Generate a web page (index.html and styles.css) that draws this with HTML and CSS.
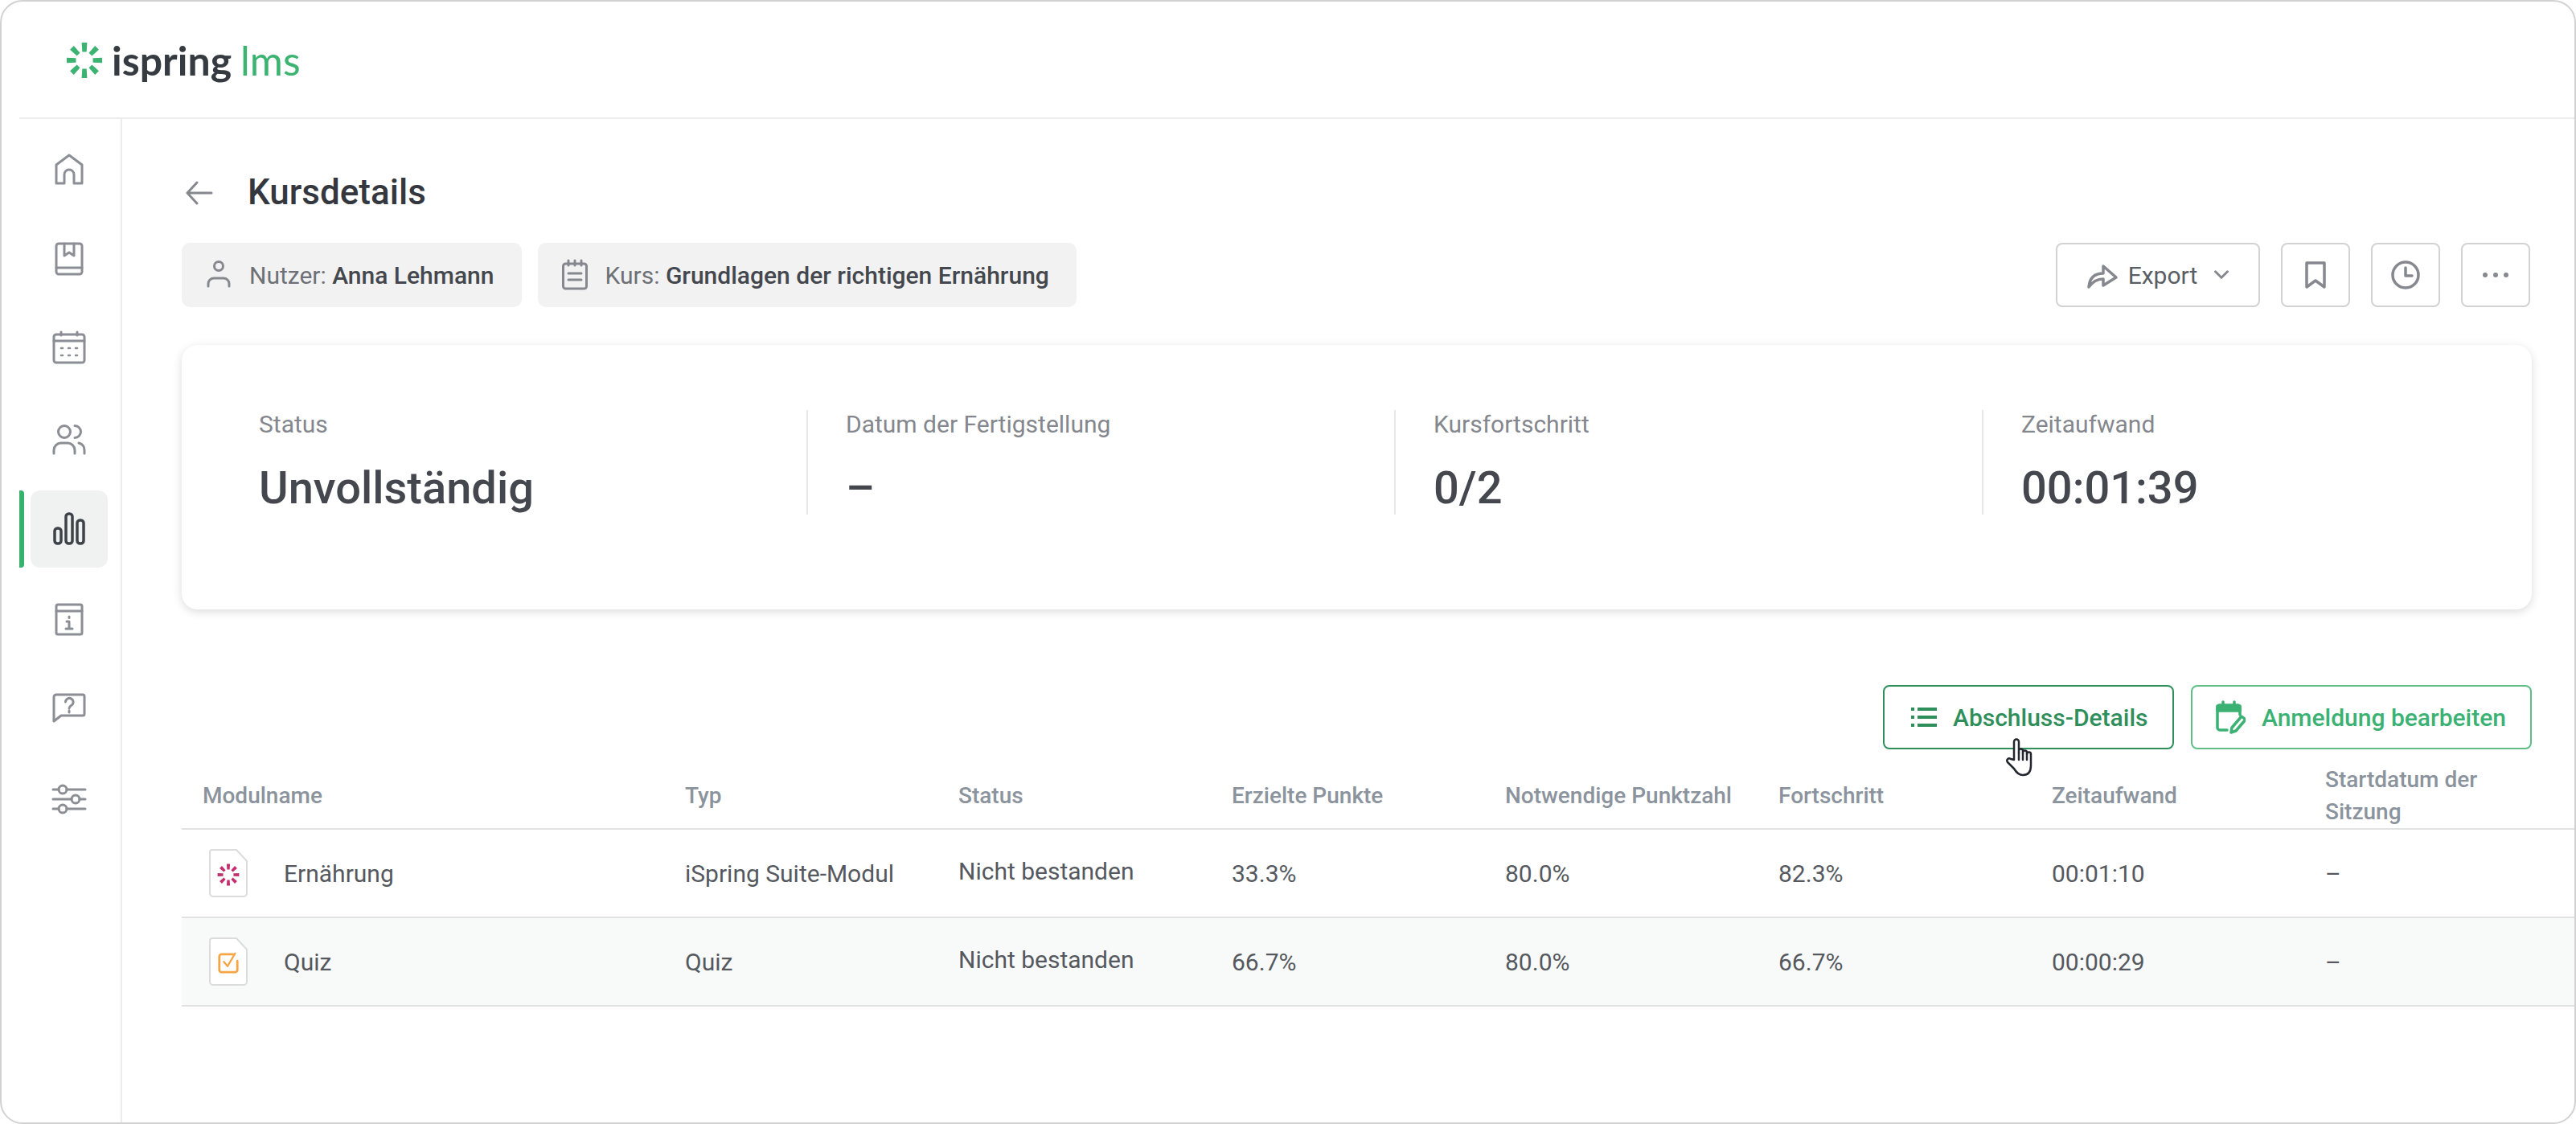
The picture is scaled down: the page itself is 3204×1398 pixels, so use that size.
FILE: index.html
```html
<!DOCTYPE html>
<html lang="de">
<head>
<meta charset="utf-8">
<title>Kursdetails</title>
<link rel="stylesheet" href="styles.css">
</head>
<body>
<svg class="defs" width="0" height="0" aria-hidden="true">
  <symbol id="spark" viewBox="-24 -24 48 48">
    <g fill="currentColor">
      <path id="petal" d="M-3.500 -23H3.500L2.800 -11H-2.800Z"/>
      <use href="#petal" transform="rotate(45)"/>
      <use href="#petal" transform="rotate(90)"/>
      <use href="#petal" transform="rotate(135)"/>
      <use href="#petal" transform="rotate(180)"/>
      <use href="#petal" transform="rotate(225)"/>
      <use href="#petal" transform="rotate(270)"/>
      <use href="#petal" transform="rotate(315)"/>
    </g>
  </symbol>
</svg>
<div class="window">
  <header class="topbar">
    <div class="logo">
      <svg class="logo-mark" viewBox="0 0 48 48"><use href="#spark"/></svg>
      <span class="logo-main">ispring</span><span class="logo-sub">lms</span>
    </div>
  </header>
  <div class="body-row">
    <nav class="sidebar">
      <a class="nav-item"><svg class="ico48" viewBox="0 0 48 48"><path d="M8 42V19L24 7l16 12v23H30V31a6 6 0 0 0-12 0v11Z"/></svg></a>
      <a class="nav-item"><svg class="ico48" viewBox="0 0 48 48"><rect x="8" y="5" width="32" height="38" rx="3"/><path d="M8 35h32M18 5v15l6-4 6 4V5"/></svg></a>
      <a class="nav-item"><svg class="ico48" viewBox="0 0 48 48"><rect x="5" y="6" width="38" height="35" rx="3"/><path d="M5 14h38M14 3v4M34 3v4"/><path class="dots" d="M14 23h2M23 23h2M32 23h2M14 32h2M23 32h2M32 32h2"/></svg></a>
      <a class="nav-item"><svg class="ico48" viewBox="0 0 48 48"><circle cx="18" cy="15" r="7.500"/><path d="M31 7.500a7.500 7.500 0 0 1 0 15M5 42v-4a9 9 0 0 1 9-9h8a9 9 0 0 1 9 9v4M36 29a8.500 8.500 0 0 1 7 9v4"/></svg></a>
      <a class="nav-item nav-active"><svg class="ico48 ico-dark" viewBox="0 0 48 48"><rect x="6" y="23" width="8" height="19" rx="3.500"/><rect x="20" y="5" width="8" height="37" rx="3.500"/><rect x="34" y="13" width="8" height="29" rx="3.500"/></svg></a>
      <a class="nav-item"><svg class="ico48" viewBox="0 0 48 48"><rect x="8" y="6" width="32" height="37" rx="2"/><path d="M8 14h32M24 21v1.500M21 27h3v9M20 36h8"/></svg></a>
      <a class="nav-item"><svg class="ico48" viewBox="0 0 48 48"><path d="M8 6h33a2 2 0 0 1 2 2v22a2 2 0 0 1-2 2H14l-9 7V9a3 3 0 0 1 3-3Z"/><path d="M19.500 15a4.800 4.800 0 1 1 7 4.500c-1.500 1-2.500 1.800-2.500 3.500M24 26v2"/></svg></a>
      <a class="nav-item"><svg class="ico48" viewBox="0 0 48 48"><path d="M4 12h7M21 12h23M4 24h23M37 24h7M4 36h7M21 36h23"/><circle cx="16" cy="12" r="5"/><circle cx="32" cy="24" r="5"/><circle cx="16" cy="36" r="5"/></svg></a>
    </nav>
    <main class="content">
      <div class="title-row">
        <svg class="back" viewBox="0 0 36 36"><path d="M33 18H4M15 5 3 18l12 13"/></svg>
        <h1 class="title">Kursdetails</h1>
      </div>
      <div class="filter-row">
        <div class="chips">
          <div class="chip">
            <svg class="ico40" viewBox="0 0 40 40"><circle cx="20" cy="9" r="5.500"/><path d="M7 34v-3a7 7 0 0 1 7-7h12a7 7 0 0 1 7 7v3"/></svg>
            <span>Nutzer: <b>Anna Lehmann</b></span>
          </div>
          <div class="chip">
            <svg class="ico40" viewBox="0 0 40 40"><rect x="5.500" y="6" width="29" height="31" rx="3"/><path d="M12 2v6M20 2v6M28 2v6M12 18h16M12 26h16"/></svg>
            <span>Kurs: <b>Grundlagen der richtigen Ernährung</b></span>
          </div>
        </div>
        <div class="tools">
          <button class="tool tool-wide">
            <svg class="ico40 ico-thick" viewBox="0 0 40 40"><path d="M3 35c1-11 7-17 18-17v-9l16 14-16 10v-8c-8 0-13 3-18 10Z"/></svg>
            <span>Export</span>
            <svg class="chev" viewBox="0 0 24 14"><path d="M3 2l9 9 9-9"/></svg>
          </button>
          <button class="tool"><svg class="ico40 ico-thick" viewBox="0 0 40 40"><path d="M9 5h22v30l-11-8-11 8Z"/></svg></button>
          <button class="tool"><svg class="ico40 ico-thick" viewBox="0 0 40 40"><circle cx="20" cy="20" r="16"/><path d="M20 11v10h8"/></svg></button>
          <button class="tool"><svg class="ico40 ico-fill" viewBox="0 0 40 40"><circle cx="7" cy="20" r="3"/><circle cx="20" cy="20" r="3"/><circle cx="33" cy="20" r="3"/></svg></button>
        </div>
      </div>
      <section class="card">
        <div class="stat"><div class="stat-label">Status</div><div class="stat-value">Unvollständig</div></div>
        <div class="stat"><div class="stat-label">Datum der Fertigstellung</div><div class="stat-value">–</div></div>
        <div class="stat"><div class="stat-label">Kursfortschritt</div><div class="stat-value">0/2</div></div>
        <div class="stat"><div class="stat-label">Zeitaufwand</div><div class="stat-value">00:01:39</div></div>
      </section>
      <div class="actions">
        <button class="action action-hover">
          <svg class="ico40 ico-green" viewBox="0 0 40 40"><path d="M12 10h24M12 20h24M12 30h24M4 10h4M4 20h4M4 30h4"/></svg>
          <span>Abschluss-Details</span>
          <svg class="cursor" viewBox="0 0 38 50"><path d="M11 27V4.500a3 3 0 0 1 6 0V18v-2a2.500 2.500 0 0 1 5 0v3-1a2.500 2.500 0 0 1 5 0v2a2.500 2.500 0 0 1 5 0v14c0 7-3 12-10 12-5 0-8-3-11-8l-8-8c-2-3 1-6 4-4Z"/><path d="M17 18v9M22 19v8M27 20v7"/></svg>
        </button>
        <button class="action">
          <svg class="ico40 ico-green2" viewBox="0 0 40 44"><path class="band" d="M5 8h28v6H5Z"/><path d="M17 38H8a3 3 0 0 1-3-3V10a3 3 0 0 1 3-3h22a3 3 0 0 1 3 3v9M12 3v6M26 3v6"/><path d="M22 41l1-6 12-14 5 4-12 14Z"/></svg>
          <span>Anmeldung bearbeiten</span>
        </button>
      </div>
      <table class="modules">
        <thead>
          <tr>
            <th>Modulname</th><th>Typ</th><th>Status</th><th>Erzielte Punkte</th><th>Notwendige Punktzahl</th><th>Fortschritt</th><th>Zeitaufwand</th><th>Startdatum der<br>Sitzung</th>
          </tr>
        </thead>
        <tbody>
          <tr>
            <td><div class="module-name">
              <svg class="file" viewBox="0 0 48 60">
                <path class="file-page" d="M4 1h30l13 14v40a4 4 0 0 1-4 4H5a4 4 0 0 1-4-4V4a3 3 0 0 1 3-3Z"/>
                <svg class="pink" x="10" y="18" width="28" height="28" viewBox="0 0 48 48"><use href="#spark"/></svg>
              </svg>Ernährung
            </div></td>
            <td>iSpring Suite-Modul</td><td class="raised">Nicht bestanden</td><td>33.3%</td><td>80.0%</td><td>82.3%</td><td>00:01:10</td><td>–</td>
          </tr>
          <tr class="row-hover">
            <td><div class="module-name">
              <svg class="file" viewBox="0 0 48 60">
                <path class="file-page" d="M4 1h30l13 14v40a4 4 0 0 1-4 4H5a4 4 0 0 1-4-4V4a3 3 0 0 1 3-3Z"/>
                <svg x="10" y="18" width="28" height="28" viewBox="0 0 30 30"><path class="quiz-box" d="M21 3H6a3 3 0 0 0-3 3v18a3 3 0 0 0 3 3h18a3 3 0 0 0 3-3V12"/><path class="quiz-check" d="M9 13l5 6L24 2"/></svg>
              </svg>Quiz
            </div></td>
            <td>Quiz</td><td class="raised">Nicht bestanden</td><td>66.7%</td><td>80.0%</td><td>66.7%</td><td>00:00:29</td><td>–</td>
          </tr>
        </tbody>
      </table>
    </main>
  </div>
</div>
</body>
</html>
```

FILE: styles.css
```css
* { box-sizing: border-box; }
html, body { margin: 0; padding: 0; background: #fff; }
body { font-family: Roboto, "Liberation Sans", sans-serif; color: #44484e; width: 3204px; height: 1398px; overflow: hidden; }
.defs { position: absolute; }

.window { width: 3204px; height: 1398px; border: 2px solid #d2d2d2; border-radius: 28px; padding-left: 22px; display: flex; flex-direction: column; overflow: hidden; background: #fff; }

.topbar { height: 146px; flex: none; border-bottom: 2px solid #ececec; padding-left: 58px; display: flex; align-items: center; }
.logo { display: flex; align-items: baseline; margin-top: 2px; }
.logo-mark { width: 46px; height: 46px; color: #3cb371; margin-right: 11px; align-self: center; }
.logo-main { font-family: Lato, sans-serif; font-weight: 700; font-size: 50px; line-height: 60px; color: #363b42; }
.logo-sub { font-family: Lato, sans-serif; font-weight: 400; font-size: 50px; line-height: 60px; color: #3cb371; margin-left: 11px; }

.body-row { flex: 1; display: flex; min-height: 0; }
.sidebar { width: 128px; flex: none; border-right: 2px solid #ececec; padding: 14px 0 0 14px; display: flex; flex-direction: column; gap: 16px; }
.nav-item { width: 96px; height: 96px; border-radius: 12px; display: flex; align-items: center; justify-content: center; position: relative; }
.nav-active { background: #f0f2f2; }
.nav-active::before { content: ""; position: absolute; left: -14px; top: 0; width: 6px; height: 96px; background: #36b26c; border-radius: 0 4px 4px 0; }

svg { display: block; flex: none; }
.ico48 { width: 48px; height: 48px; fill: none; stroke: #8b8e94; stroke-width: 3; stroke-linejoin: round; stroke-linecap: round; }
.ico48 .dots { stroke-width: 2.500; }
.ico-dark { stroke: #3e434a; stroke-width: 3.500; }
.ico40 { width: 40px; height: 40px; fill: none; stroke: #85888e; stroke-width: 3; stroke-linejoin: round; stroke-linecap: round; }
.ico-thick { stroke-width: 3.500; }
.ico-fill { fill: #85888e; stroke: none; }
.ico-green { stroke: #2f8f5b; stroke-width: 4; stroke-linecap: butt; }
.ico-green2 { stroke: #3bb273; stroke-width: 3.500; height: 44px; }
.band { fill: #3bb273; }

.content { flex: 1; min-width: 0; padding: 64px 53px 0 74px; }
.title-row { display: flex; align-items: center; height: 56px; gap: 42px; margin-left: 4px; }
.back { width: 36px; height: 36px; fill: none; stroke: #85888e; stroke-width: 3; stroke-linecap: round; stroke-linejoin: round; }
.title { margin: -2px 0 0; font-size: 44px; line-height: 56px; font-weight: 500; color: #34383e; }

.filter-row { display: flex; justify-content: space-between; margin-top: 34px; }
.chips { display: flex; gap: 20px; }
.chip { height: 80px; border-radius: 10px; background: #f2f2f2; padding: 0 34px 0 26px; display: flex; align-items: center; gap: 18px; font-size: 30px; color: #6d7177; }
.chip b { font-weight: 500; color: #44484e; }
.tools { display: flex; gap: 26px; margin-right: 2px; }
.tool { width: 86px; height: 80px; border: 2px solid #d2d2d2; border-radius: 8px; background: #fff; display: flex; align-items: center; justify-content: center; padding: 0; font: inherit; font-size: 30px; color: #5a5e64; }
.tool-wide { width: 254px; gap: 12px; }
.chev { width: 20px; height: 12px; margin-left: 8px; fill: none; stroke: #85888e; stroke-width: 3.500; stroke-linecap: round; stroke-linejoin: round; }

.card { margin-top: 47px; height: 329px; border-radius: 20px; background: #fff; box-shadow: 0 3px 12px rgba(0, 0, 0, .14); padding: 81px 0 0 96px; display: flex; }
.stat { flex: none; width: 731px; height: 130px; border-left: 2px solid #e8e8e8; padding-left: 47px; }
.stat:first-child { width: 681px; border-left: 0; padding-left: 0; }
.stat:last-child { width: 590px; }
.stat-label { margin-top: -2px; font-size: 30px; line-height: 40px; color: #84878d; }
.stat-value { margin-top: 23px; font-size: 56px; line-height: 72px; font-weight: 500; color: #44484e; }

.actions { display: flex; justify-content: flex-end; gap: 21px; margin-top: 94px; }
.action { height: 80px; width: 424px; padding-left: 26px; gap: 20px; border: 2px solid #5fbe87; border-radius: 8px; background: #fff; display: flex; align-items: center; font: inherit; font-size: 30px; font-weight: 500; color: #3bb273; position: relative; }
.action-hover { width: 362px; padding-left: 29px; gap: 16px; border-color: #2f8f5b; color: #2f8f5b; }
.cursor { position: absolute; left: 150px; top: 64px; width: 38px; height: 50px; fill: #fff; stroke: #23262e; stroke-width: 2.500; stroke-linejoin: round; stroke-linecap: round; z-index: 2; }

.modules { width: 2976px; margin: 16px -53px 0 0; border-collapse: collapse; table-layout: fixed; }
.modules th:first-child { width: 600px; }
.modules th { width: 340px; text-align: left; font-size: 28px; line-height: 40px; font-weight: 500; color: #8b939d; padding: 2px 0 0 26px; height: 83px; border-bottom: 2px solid #e2e2e2; }
.modules td { height: 110px; padding: 0 0 0 26px; font-size: 30px; color: #55595f; border-bottom: 2px solid #e2e2e2; }
.modules td.raised { padding-bottom: 6px; }
.row-hover td { background: #f8f9f9; }
.module-name { display: flex; align-items: center; gap: 45px; padding-left: 8px; }
.file { width: 48px; height: 60px; }
.file-page { fill: #fff; stroke: #dcdcdc; stroke-width: 2; stroke-linejoin: round; }
.pink { color: #c2306e; }
.quiz-box { fill: none; stroke: #f6a545; stroke-width: 3; stroke-linecap: round; }
.quiz-check { fill: none; stroke: #f6a545; stroke-width: 2.500; stroke-linecap: round; stroke-linejoin: round; }
```
